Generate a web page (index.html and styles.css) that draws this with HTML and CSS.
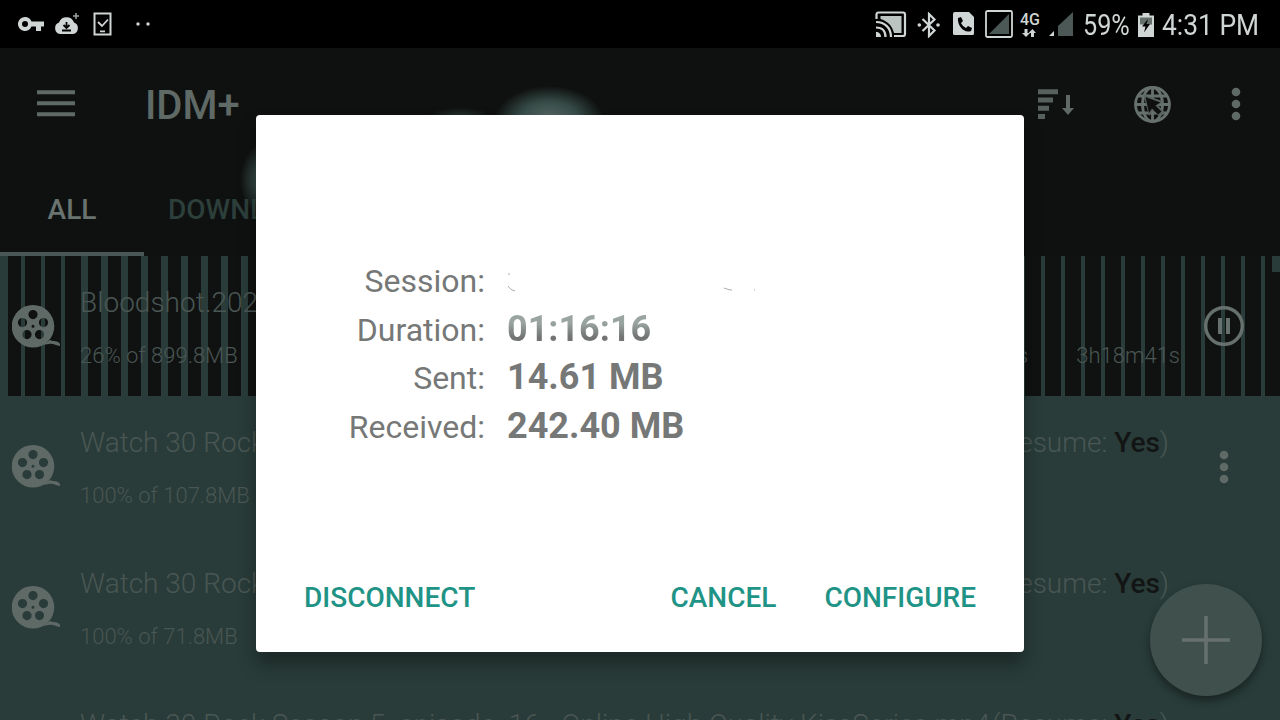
FILE: index.html
```html
<!DOCTYPE html>
<html lang="en">
<head>
    <meta charset="UTF-8">
    <meta name="viewport" content="width=device-width, initial-scale=1.0">
    <title>IDM+</title>
    <link rel="stylesheet" href="styles.css">
</head>
<body>
    <!-- shared icons -->
    <svg class="defs" width="0" height="0">
        <symbol id="reel" viewBox="0 0 48 44">
            <path fill-rule="evenodd" d="M21 0a21.3 21.3 0 1 0 0 42.600A21.300 21.300 0 0 0 21 0zM21 5a4.600 4.600 0 1 1 0 9.200A4.600 4.600 0 0 1 21 5zM10.500 13a4.600 4.600 0 1 1 0 9.200 4.600 4.600 0 0 1 0-9.200zM31.500 13a4.600 4.600 0 1 1 0 9.200 4.600 4.600 0 0 1 0-9.200zM15 25a4.600 4.600 0 1 1 0 9.200 4.600 4.600 0 0 1 0-9.200zM27.500 25a4.600 4.600 0 1 1 0 9.200 4.600 4.600 0 0 1 0-9.200zM21 19.700a1.500 1.500 0 1 1 0 3 1.500 1.500 0 0 1 0-3z"/>
            <path d="M30 40l8-5c3 2 8 0 10 4v2c-4 0-7-3-11-2z"/>
        </symbol>
        <symbol id="more" viewBox="0 0 10 34">
            <circle cx="5" cy="5" r="4.300"/>
            <circle cx="5" cy="17" r="4.300"/>
            <circle cx="5" cy="29" r="4.300"/>
        </symbol>
    </svg>

    <div class="statusbar">
        <div class="status-left">
            <svg class="key" width="27" height="16" viewBox="0 0 27 16">
                <path fill-rule="evenodd" d="M7 1a7 7 0 1 0 6.500 9.500H18V15h5v-4.500h3v-5H13.500A7 7 0 0 0 7 1zm0 4a3 3 0 1 1 0 6 3 3 0 0 1 0-6z"/>
            </svg>
            <svg class="cloud" width="26" height="22" viewBox="0 0 26 22">
                <path d="M6 21a6 6 0 0 1-1-11.500 8 8 0 0 1 15 0A6 6 0 0 1 19 21z"/>
                <path d="M22 0v6M19 3h6" stroke="#9da5a3" stroke-width="1.500"/>
                <path d="M12.500 9v5M9.500 12l3 3 3-3M8 17.500h9" fill="none" stroke="#000" stroke-width="1.800"/>
            </svg>
            <svg class="task" width="20" height="24" viewBox="0 0 20 24">
                <path d="M1.500 1.500h16v21h-16z" fill="none" stroke="#d0d6d5" stroke-width="2"/>
                <path d="M5 10l4 4 6-6.500M7 19.300h5" fill="none" stroke="#d0d6d5" stroke-width="1.800"/>
            </svg>
            <svg class="dots" width="16" height="4" viewBox="0 0 16 4">
                <circle cx="2" cy="2" r="1.700"/>
                <circle cx="12" cy="2" r="1.700"/>
            </svg>
        </div>
        <div class="status-right">
            <svg class="cast" width="32" height="27" viewBox="0 0 32 27">
                <path d="M1.500 8V3.500a2 2 0 0 1 2-2H28a2 2 0 0 1 2 2V23a2 2 0 0 1-2 2h-9" fill="none" stroke="#d0d6d5" stroke-width="2.200"/>
                <path d="M5.500 5h21v17h-7.500C17 14 12 10 5.500 8z" fill="#bcc4c2"/>
                <path d="M1 11c9 0 15 6 15 15M1 16.500c6 0 9.500 3.500 9.500 9.500" fill="none" stroke="#d0d6d5" stroke-width="2.200"/>
                <path d="M1 21c3 0 5 2 5 5H1z"/>
            </svg>
            <svg class="bluetooth" width="24" height="26" viewBox="0 0 24 26">
                <path d="M5.500 7l12 11.500L12 24V2l5.500 5.500-12 11.500" fill="none" stroke="#d0d6d5" stroke-width="2.200"/>
                <circle cx="2.300" cy="13" r="1.800"/>
                <circle cx="21" cy="13" r="1.800"/>
            </svg>
            <svg class="simcall" width="22" height="24" viewBox="0 0 22 24">
                <path d="M2 0h14l5 5v16.500a1.500 1.500 0 0 1-1.500 1.500h-18A1.500 1.500 0 0 1 0 21.500V2a2 2 0 0 1 2-2z"/>
                <path d="M5 6l3-1 2 4-2 2c1 2 3 4 5 5l2-2 4 2-1 3c-7 3-14-6-13-13z" fill="#000"/>
            </svg>
            <svg class="sim" width="28" height="28" viewBox="0 0 28 28">
                <rect x="1" y="1" width="26" height="26" rx="1.500" fill="none" stroke="#d0d6d5" stroke-width="1.800"/>
                <path d="M24 4v20H4z" fill="#4c5855"/>
            </svg>
            <div class="network">
                <span>4G</span>
                <svg width="14" height="8" viewBox="0 0 14 8">
                    <path d="M2.500 0h3v4H8L4 8 0 4h2.500zM9 8V4H6.500L10.500 0 14 4h-2v4z"/>
                </svg>
            </div>
            <svg class="signal" width="25" height="24" viewBox="0 0 25 24">
                <path d="M24 0v24H9V14z" fill="#4c5855"/>
                <path d="M5 19v5H0z"/>
            </svg>
            <span class="percent">59%</span>
            <svg class="battery" width="16" height="24" viewBox="0 0 16 24">
                <path d="M4.500 0h7v2.500H16V24H0V2.500h4.500z"/>
                <path d="M2 4.500h12v7H2z" fill="#66716e"/>
                <path d="M10 6L4 13.500h3.500L6 19.500l6-8.500H8.500z" fill="#000"/>
            </svg>
            <span class="clock">4:31 PM</span>
        </div>
    </div>

    <header>
        <div class="toolbar">
            <svg class="menu" width="38" height="27" viewBox="0 0 38 27">
                <path d="M0 2.300h38M0 13.300h38M0 24.300h38" stroke="#5f6966" stroke-width="4"/>
            </svg>
            <h1>IDM+</h1>
            <svg class="sort" width="37" height="31" viewBox="0 0 37 31">
                <path d="M0 2.800h20M0 11h15M0 19.300h11M0 27.500h7" stroke="#56605d" stroke-width="5"/>
                <path d="M28 6h4v13h4l-6 7-6-7h4z"/>
            </svg>
            <svg class="globe" width="37" height="37" viewBox="0 0 37 37">
                <g fill="none" stroke="#66706d" stroke-width="2.800">
                    <circle cx="18.500" cy="18.500" r="17"/>
                    <ellipse cx="18.500" cy="18.500" rx="10" ry="17"/>
                    <path d="M18.500 1v35M1 18.500h35M4.500 10h28M4.500 27h28"/>
                </g>
                <path d="M9.500 8.500l20 7-5.500 4 7 7-5 4.500-7-7-4 6z" fill="#5a6461"/>
                <path d="M11.500 11l15 5.500-5 3 6 6-3.500 3-6-6-3 4.500z" fill="#0f1110"/>
            </svg>
            <svg class="overflow" width="10" height="34"><use href="#more"/></svg>
        </div>
        <div class="tabs">
            <div class="tab active">ALL</div>
            <div class="tab">DOWNLOADING</div>
        </div>
    </header>

    <main>
        <div class="item downloading">
            <svg class="reel" width="48" height="44"><use href="#reel"/></svg>
            <div class="info">
                <p class="name">Bloodshot.2020</p>
                <p class="detail"><span>26% of 899.8MB</span><span class="speed">s</span><span class="eta">3h18m41s</span></p>
            </div>
            <svg class="pause" width="40" height="40" viewBox="0 0 40 40">
                <circle cx="20" cy="20" r="18.300" fill="none" stroke="#66706d" stroke-width="3.400"/>
                <path d="M14 12h4v16h-4zM22 12h4v16h-4z"/>
            </svg>
        </div>
        <div class="item">
            <svg class="reel" width="48" height="44"><use href="#reel"/></svg>
            <div class="info">
                <p class="name"><span>Watch 30 Rock</span><span class="resume">(Resume: <b>Yes</b>)</span></p>
                <p class="detail">100% of 107.8MB</p>
            </div>
            <svg class="row-more" width="10" height="34"><use href="#more"/></svg>
        </div>
        <div class="item">
            <svg class="reel" width="48" height="44"><use href="#reel"/></svg>
            <div class="info">
                <p class="name"><span>Watch 30 Rock</span><span class="resume">(Resume: <b>Yes</b>)</span></p>
                <p class="detail">100% of 71.8MB</p>
            </div>
        </div>
        <div class="item">
            <div class="info">
                <p class="name"><span>Watch 30 Rock Season 5. episode. 16 - Online High Quality KissSeries.mp4</span><span class="resume">(Resume: <b>Yes</b>)</span></p>
            </div>
        </div>
    </main>

    <button class="fab">
        <svg width="48" height="48" viewBox="0 0 48 48">
            <path d="M24 0v48M0 24h48" stroke="#66706d" stroke-width="3.500"/>
        </svg>
    </button>

    <div class="glow glow-top"></div>
    <div class="glow glow-small"></div>
    <div class="glow glow-left"></div>

    <!-- VPN session dialog -->
    <div class="dialog">
        <dl>
            <dt>Session:</dt>
            <dd>
                <svg width="250" height="22" viewBox="0 0 250 22" fill="none" stroke="#a5adab">
                    <path d="M1 2h2M1 14c2 3 4 4 7 5M217 16c3 1 5 2 8 2M247 18h1"/>
                </svg>
            </dd>
            <dt>Duration:</dt>
            <dd class="duration">01:16:16</dd>
            <dt>Sent:</dt>
            <dd>14.61 MB</dd>
            <dt>Received:</dt>
            <dd>242.40 MB</dd>
        </dl>
        <div class="actions">
            <button class="disconnect">DISCONNECT</button>
            <button class="cancel">CANCEL</button>
            <button class="configure">CONFIGURE</button>
        </div>
    </div>
</body>
</html>
```
FILE: styles.css
```css
* {
    box-sizing: border-box;
}

body {
    margin: 0;
    width: 1280px;
    height: 720px;
    overflow: hidden;
    position: relative;
    background: #293c39;
    font-family: Roboto, sans-serif;
    color: #495653;
}

svg {
    display: block;
    flex: none;
}

.defs {
    position: absolute;
}

h1, p, dl, dd {
    margin: 0;
}

/* Status bar */
.statusbar {
    display: flex;
    justify-content: space-between;
    height: 48px;
    background: #000;
    color: #d0d6d5;
    fill: #d0d6d5;
}

.status-left,
.status-right {
    display: flex;
    align-items: center;
}

.status-left {
    padding-left: 18px;
}

.cloud {
    margin-left: 9px;
}

.task {
    margin-left: 13px;
}

.dots {
    margin-left: 23px;
}

.status-right {
    width: 405px;
    padding-top: 1px;
}

.bluetooth {
    margin-left: 10px;
}

.simcall {
    margin: -1px 0 0 12px;
}

.sim {
    margin: -2px 0 0 10px;
}

.network {
    width: 20px;
    margin-left: 7px;
    font-size: 16px;
    line-height: 14px;
    font-weight: 500;
}

.network svg {
    margin: 2px 0 0 2px;
}

.signal {
    margin: -1px 0 0 9px;
}

.percent,
.clock {
    font-size: 30px;
    line-height: 48px;
    white-space: nowrap;
    transform-origin: left center;
}

.percent {
    width: 46px;
    margin-left: 9px;
    transform: scaleX(0.84);
}

.battery {
    margin-left: 9px;
}

.clock {
    margin-left: 8px;
    transform: scaleX(0.88);
}

/* App bar */
header {
    height: 208px;
    background: #0f1110;
}

.toolbar {
    display: flex;
    align-items: center;
    height: 112px;
    padding: 0 39px 0 37px;
    fill: #5f6966;
}

.menu {
    margin-top: -2px;
}

h1 {
    width: 110px;
    margin-left: 70px;
    font-size: 40px;
    line-height: 48px;
    font-weight: 500;
    color: #5f6966;
    padding-top: 3px;
}

.sort {
    margin-left: auto;
}

.globe {
    margin-left: 59px;
}

.overflow {
    margin-left: 60px;
}

.tabs {
    display: flex;
    height: 96px;
}

.tab {
    width: 144px;
    padding-top: 1px;
    text-align: center;
    font-size: 28px;
    line-height: 97px;
    font-weight: 500;
    color: #2c3f3b;
    text-indent: 24px;
    white-space: nowrap;
}

.tab.active {
    text-indent: 0;
    color: #69736f;
    border-bottom: 4px solid #4b5754;
}

/* Download list */
main {
    height: 464px;
    overflow: hidden;
}

.item {
    display: flex;
    height: 141px;
    padding-left: 12px;
    fill: #5f6966;
}

.item:last-child {
    height: 42px;
}

/* striped progress, brighter on the finished part */
.downloading {
    height: 140px;
    background:
        linear-gradient(#293c39, #293c39) 0 0 / 8px 100% no-repeat,
        linear-gradient(#293c39, #293c39) 1272px 0 / 8px 16px no-repeat,
        repeating-linear-gradient(90deg, #293c39 0 4px, #101211 4px 20px) 21px 0 / 60px 100% no-repeat,
        repeating-linear-gradient(90deg, #293c39 0 7px, #101211 7px 20px) 81px 0 / 167px 100% no-repeat,
        repeating-linear-gradient(90deg, #293c39 0 4px, #101211 4px 20px) 1021px 0 / 251px 100% no-repeat,
        #101211;
}

.reel {
    margin-top: 49px;
}

.info {
    margin-left: 20px;
    width: 1100px;
    white-space: nowrap;
    font-weight: 300;
}

.item:last-child .info {
    margin-left: 68px;
}

.name {
    display: flex;
    justify-content: space-between;
    width: 1089px;
    padding-top: 29px;
    font-size: 28px;
    line-height: 36px;
}

.resume b {
    font-weight: 500;
    color: #121514;
}

.detail {
    display: flex;
    padding-top: 21px;
    font-size: 22px;
    line-height: 28px;
}

.speed {
    margin-left: auto;
}

.eta {
    margin-left: 48px;
}

.downloading .detail {
    width: 1100px;
}

.pause {
    margin: 50px 0 0 24px;
    fill: #66706d;
}

.row-more {
    margin: 54px 0 0 39px;
}

/* Floating button */
.fab {
    position: absolute;
    left: 1150px;
    top: 584px;
    width: 112px;
    height: 112px;
    padding: 0;
    border: none;
    border-radius: 50%;
    background: #40504c;
    box-shadow: 0 5px 8px rgba(0, 0, 0, 0.4);
}

.fab svg {
    margin: 0 auto;
}

/* Light spots behind the dialog */
.glow {
    position: absolute;
}

.glow-top {
    left: 494px;
    top: 86px;
    width: 110px;
    height: 70px;
    background: radial-gradient(closest-side, #5b6a67, #364b47 55%, transparent);
}

.glow-small {
    left: 430px;
    top: 107px;
    width: 60px;
    height: 20px;
    background: radial-gradient(closest-side, #26332f, transparent);
}

.glow-left {
    left: 240px;
    top: 140px;
    width: 60px;
    height: 80px;
    background: radial-gradient(closest-side, #3a514c 40%, transparent);
}

/* Dialog */
.dialog {
    position: absolute;
    left: 256px;
    top: 115px;
    width: 768px;
    height: 537px;
    padding-top: 142px;
    border-radius: 4px;
    background: #fff;
    box-shadow: 0 12px 18px rgba(0, 0, 0, 0.35);
}

dl {
    display: grid;
    grid-template-columns: 229px 1fr;
    grid-auto-rows: 48.600px;
    column-gap: 22px;
    color: #767877;
    line-height: 48px;
}

dt {
    text-align: right;
    font-size: 32px;
}

dd {
    font-size: 36px;
    line-height: 46px;
    font-weight: 700;
}

dd svg {
    margin-top: 15px;
}

.duration {
    background: linear-gradient(#9aa5a2 35%, #727473 65%);
    background-clip: text;
    -webkit-background-clip: text;
    color: transparent;
}

.actions {
    display: flex;
    padding: 123px 48px 0;
}

.actions button {
    padding: 0;
    border: none;
    background: none;
    font: 500 28px/48px Roboto, sans-serif;
    color: #1f9486;
}

.cancel {
    margin-left: auto;
}

.actions .configure {
    margin-left: 48px;
}
```
